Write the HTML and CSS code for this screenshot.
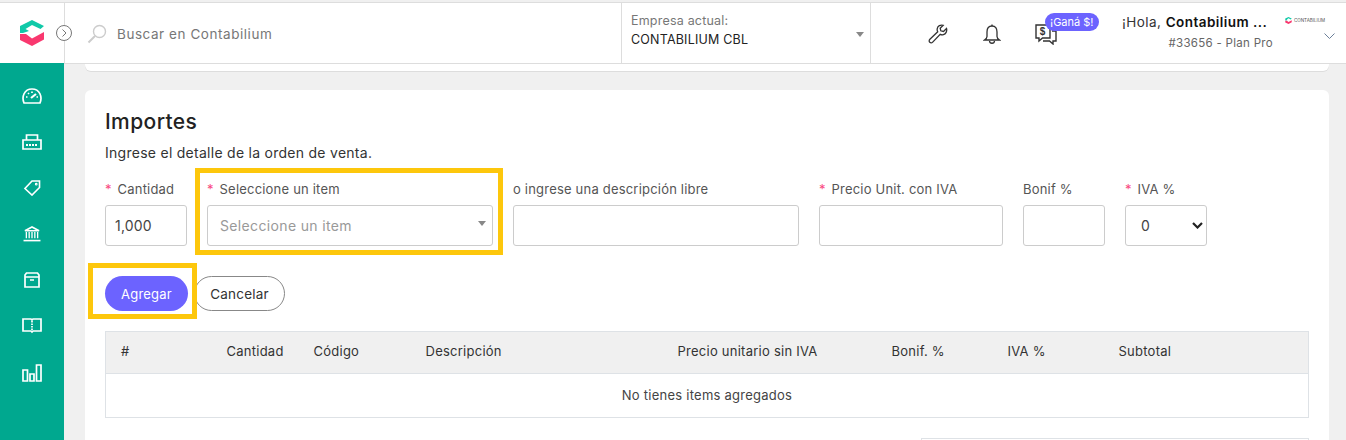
FILE: index.html
```html
<!DOCTYPE html>
<html lang="es">
<head>
    <meta charset="UTF-8">
    <title>Contabilium</title>
    <link rel="stylesheet" href="styles.css">
</head>
<body>

<!-- Top bar -->
<header class="topbar">
    <div class="brand">
        <svg width="24" height="26" viewBox="0 0 24 26">
            <path d="M12 0 L24 6 L20.500 9 L12 5 L5.500 9 L9 11 L3 13 L0 13 V6 Z" fill="#10c9a8"/>
            <path d="M0 14 V20 L12 26 L24 19.500 V12 L12 18.500 L6 14 Z" fill="#f9386f"/>
        </svg>
        <span class="toggle">
            <svg width="16" height="16" viewBox="0 0 16 16" fill="none" stroke="#777"><circle cx="8" cy="8" r="7.500"/><path d="M6.500 4.500 L10 8 L6.500 11.500"/></svg>
        </span>
    </div>
    <div class="search">
        <svg width="20" height="20" viewBox="0 0 20 20" fill="none" stroke="#ccc" stroke-width="1.400"><circle cx="12.500" cy="7.500" r="6"/><path d="M8 12 L1.500 18.500" stroke-width="2"/></svg>
        <span>Buscar en Contabilium</span>
    </div>
    <div class="company">
        <div class="company-label">Empresa actual:</div>
        <div class="company-name">CONTABILIUM CBL</div>
        <span class="caret"></span>
    </div>
    <div class="tools">
        <svg class="tool-wrench" width="20" height="20" viewBox="0 0 20 20" fill="none" stroke="#333" stroke-width="1.300"><path d="M18.500 4.500 L15.500 7.500 L12.800 6.800 L12.200 4.200 L15.200 1.300 C12.500 .4 9.600 2 9.200 4.800 C9 5.900 9.300 6.900 9.700 7.800 L1.900 15.300 C.9 16.300 1 17.600 1.800 18.300 C2.600 19 3.800 19 4.700 18.100 L12.200 10.400 C13.200 10.900 14.300 11 15.400 10.700 C17.800 10 19.300 7.200 18.500 4.500 Z"/></svg>
        <svg class="tool-bell" width="18" height="21" viewBox="0 0 18 21" fill="none" stroke="#333" stroke-width="1.300"><path d="M9 2 C5.500 2 4 4.500 4 8 L4 12.500 C4 14 3 15 1.500 16 L16.500 16 C15 15 14 14 14 12.500 L14 8 C14 4.500 12.500 2 9 2 Z"/><path d="M9 .5 V2 M6.500 17 C6.700 20 11.300 20 11.500 17"/></svg>
        <div class="promo">
            <svg width="22" height="21" viewBox="0 0 22 21" fill="none" stroke="#333" stroke-width="1.400"><path d="M15 11 V1 H1 V14 H4 V17 L7.500 14 H15 Z"/><path d="M17 7 H21 V17 H18 V20 L14.500 17 H8"/><text x="4.800" y="11" font-size="10" font-weight="700" fill="#333" stroke="none" font-family="Liberation Sans">$</text></svg>
            <span class="promo-badge">¡Ganá $!</span>
        </div>
    </div>
    <div class="user">
        <div class="user-hello">¡Hola, <b>Contabilium ...</b></div>
        <div class="user-plan">#33656 - Plan Pro</div>
    </div>
    <div class="user-logo">
        <div class="mini-logo">
            <svg width="7" height="7" viewBox="0 0 24 26"><path d="M12 0 L24 6 L20.500 9 L12 5 L5.500 9 L9 11 L3 13 L0 13 V6 Z" fill="#10c9a8"/><path d="M0 14 V20 L12 26 L24 19.500 V12 L12 18.500 L6 14 Z" fill="#f9386f"/></svg>
            <span>CONTABILIUM</span>
        </div>
        <svg class="user-chevron" width="11" height="7" viewBox="0 0 11 7" fill="none" stroke="#6b7f99"><path d="M.5 .5 L5.500 5.500 L10.500 .5"/></svg>
    </div>
</header>

<div class="layout">

    <!-- Sidebar -->
    <nav class="sidebar">
        <svg width="20" height="16" viewBox="0 0 20 16" fill="none" stroke="#fff" stroke-width="1.700"><path d="M2 15 C-.5 9 2 1 10 1 C18 1 20.500 9 18 15 Z"/><path d="M9 10 L14 6" stroke-width="2.200"/><path d="M4 9 H5.500 M6 5 L7 6 M10 3.500 V5 M16 9 H14.500"/></svg>
        <svg width="20" height="16" viewBox="0 0 20 16" fill="none" stroke="#fff" stroke-width="1.700"><path d="M4.500 6 V1 H15.500 V6"/><path d="M1 15 V6 H19 V15 Z"/><path d="M4 11 H16" stroke-width="2" stroke-dasharray="2 1"/></svg>
        <svg width="18" height="17" viewBox="0 0 18 17" fill="none" stroke="#fff" stroke-width="1.700"><path d="M9 1 H17 V8 L9 16 L1.500 9 Z"/><circle cx="13.500" cy="4.500" r=".6"/></svg>
        <svg width="18" height="17" viewBox="0 0 18 17" fill="none" stroke="#fff" stroke-width="1.700"><path d="M1.500 5 L9 1 L16.500 5 Z"/><path d="M3 6.500 V13 M6 6.500 V13 M9 6.500 V13 M12 6.500 V13 M15 6.500 V13" stroke-width="1.400"/><path d="M0 15.500 H18"/></svg>
        <svg width="16" height="16" viewBox="0 0 16 16" fill="none" stroke="#fff" stroke-width="1.700"><path d="M1 15 V3 L2.500 1 H13.500 L15 3 V15 Z"/><path d="M1 5 H15 M6 8 H10"/></svg>
        <svg width="20" height="16" viewBox="0 0 20 16" fill="none" stroke="#fff" stroke-width="1.700"><path d="M1 1 H9 L10 2 L11 1 H19 V13 H11 L10 14 L9 13 H1 Z"/><path d="M10 3 V13" stroke-dasharray="1.500 1"/></svg>
        <svg class="icon-chart" width="20" height="18" viewBox="0 0 20 18" fill="none" stroke="#fff" stroke-width="1.700"><path d="M1 6 H5.500 V17 H1 Z M8 10 H12 V17 H8 Z M14.500 1 H19 V17 H14.500 Z"/></svg>
    </nav>

    <main class="content">
        <div class="card card-prev"></div>

        <section class="card card-main">
            <h2>Importes</h2>
            <p class="hint">Ingrese el detalle de la orden de venta.</p>

            <div class="form-row">
                <div class="field w-sm">
                    <label><i>*</i> Cantidad</label>
                    <input type="text" value="1,000">
                </div>
                <div class="field w-lg marked-field">
                    <label><i>*</i> Seleccione un item</label>
                    <div class="fake-select">Seleccione un item<span class="caret"></span></div>
                </div>
                <div class="field w-lg">
                    <label>o ingrese una descripción libre</label>
                    <input type="text">
                </div>
                <div class="field w-md">
                    <label><i>*</i> Precio Unit. con IVA</label>
                    <input type="text">
                </div>
                <div class="field w-sm">
                    <label>Bonif %</label>
                    <input type="text">
                </div>
                <div class="field w-sm">
                    <label><i>*</i> IVA %</label>
                    <div class="fake-iva">0
                        <svg width="11" height="7" viewBox="0 0 11 7" fill="none" stroke="#222" stroke-width="2.200"><path d="M1 1 L5.500 5.500 L10 1"/></svg>
                    </div>
                </div>
            </div>

            <div class="actions">
                <div class="marked-btn">
                    <button class="btn-primary">Agregar</button>
                </div>
                <button class="btn-outline">Cancelar</button>
            </div>

            <table>
                <colgroup>
                    <col style="width:106px"><col style="width:87px"><col style="width:112px"><col style="width:252px">
                    <col style="width:214px"><col style="width:116px"><col style="width:111px"><col>
                </colgroup>
                <thead>
                    <tr>
                        <th>#</th>
                        <th>Cantidad</th>
                        <th>Código</th>
                        <th>Descripción</th>
                        <th>Precio unitario sin IVA</th>
                        <th>Bonif. %</th>
                        <th>IVA %</th>
                        <th>Subtotal</th>
                    </tr>
                </thead>
                <tbody>
                    <tr>
                        <td colspan="8">No tienes items agregados</td>
                    </tr>
                </tbody>
            </table>

            <div class="totals"></div>
        </section>
    </main>
</div>

</body>
</html>
```

FILE: styles.css
```css
* {
    box-sizing: border-box;
}

html, body {
    height: 440px;
    overflow: hidden;
}

body {
    margin: 0;
    background: #f0f0f0;
    font-family: "Inter", "Open Sans", sans-serif;
    font-size: 13px;
    color: #333;
}

/* top bar */
.topbar {
    display: flex;
    align-items: stretch;
    height: 62px;
    margin-top: 2px;
    margin-bottom: -1px;
    background: white;
    border-top: 1px solid #ddd;
    border-bottom: 1px solid #ddd;
    position: relative;
    z-index: 2;
}

.brand {
    width: 65px;
    display: flex;
    align-items: center;
    padding-left: 20px;
    border-right: 1px solid #ddd;
    position: relative;
    flex: none;
}

.toggle {
    position: absolute;
    left: 56px;
    top: 22px;
    width: 16px;
    height: 16px;
    display: flex;
    background: white;
    border-radius: 50%;
}

.search {
    width: 556px;
    flex: none;
    display: flex;
    align-items: center;
    gap: 10px;
    padding: 2px 0 0 22px;
    color: #777;
    font-size: 13.5px;
    letter-spacing: .55px;
}

.company {
    width: 250px;
    flex: none;
    border-left: 1px solid #ddd;
    border-right: 1px solid #ddd;
    padding: 9px 0 0 9px;
    position: relative;
    letter-spacing: .2px;
}

.company-label {
    font-size: 12.5px;
    color: #777;
    line-height: 18px;
}

.company-name {
    font-size: 12.5px;
    color: #222;
    line-height: 20px;
}

.caret {
    position: absolute;
    right: 6px;
    top: 29px;
    border-left: 4px solid transparent;
    border-right: 4px solid transparent;
    border-top: 5px solid #888;
}

.tools {
    width: 251px;
    flex: none;
    display: flex;
    align-items: center;
    padding: 2px 0 0 57px;
}

.tool-bell {
    margin-left: 35px;
}

.promo {
    margin-left: 34px;
    position: relative;
    display: flex;
}

.promo-badge {
    position: absolute;
    left: 10px;
    top: -11px;
    background: #6c63ff;
    color: white;
    font-size: 11px;
    line-height: 18px;
    padding: 0 5px;
    border-radius: 9px;
    white-space: nowrap;
}

.user {
    width: 163px;
    flex: none;
    text-align: right;
    padding-top: 10px;
    letter-spacing: .3px;
}

.user-hello {
    font-size: 13.5px;
    color: #333;
    line-height: 18px;
    text-align: left;
    letter-spacing: .45px;
}

.user-hello b {
    color: #111;
    font-weight: 600;
}

.user-plan {
    font-size: 11.5px;
    color: #666;
    line-height: 24px;
    padding-right: 12px;
}

.user-logo {
    flex: 1;
    position: relative;
}

.mini-logo {
    display: flex;
    align-items: center;
    gap: 2px;
    margin-top: 14px;
    font-size: 4.5px;
    color: #555;
    white-space: nowrap;
}

.user-chevron {
    position: absolute;
    left: 39px;
    top: 30px;
}

/* page */
.layout {
    display: flex;
    height: 377px;
}

.sidebar {
    width: 64px;
    flex: none;
    background: #00a88f;
    display: flex;
    flex-direction: column;
    align-items: center;
    padding-top: 25px;
    gap: 30px;
    position: relative;
    z-index: 3;
}

.sidebar svg {
    height: 16px;
    flex: none;
}

.sidebar .icon-chart {
    height: 18px;
}

.content {
    flex: 1;
    padding: 0 17px 0 21px;
    min-width: 0;
}

.card {
    background: white;
    border-radius: 6px;
}

.card-prev {
    height: 8px;
    border-radius: 0 0 6px 6px;
    margin-bottom: 19px;
    box-shadow: 0 1px 0 #ddd;
}

.card-main {
    height: 350px;
    padding: 20px 20px 0;
    border-radius: 6px 6px 0 0;
}

h2 {
    margin: 0;
    font-size: 21px;
    font-weight: 500;
    line-height: 24px;
    color: #222;
    letter-spacing: .4px;
}

.hint {
    margin: 9px 0 0;
    font-size: 14px;
    line-height: 20px;
    color: #333;
    letter-spacing: .27px;
}

.form-row {
    display: flex;
    gap: 20px;
    margin-top: 17px;
}

.field label {
    display: block;
    height: 25px;
    line-height: 19px;
    color: #555;
    white-space: nowrap;
    letter-spacing: .2px;
}

.field label i {
    color: #f9487f;
    font-style: normal;
    margin-right: 2px;
}

.w-sm { width: 82px; }
.w-md { width: 184px; }
.w-lg { width: 286px; }

.field input,
.fake-select,
.fake-iva {
    display: block;
    width: 100%;
    height: 41px;
    border: 1px solid #ccc;
    border-radius: 3px;
    background: white;
    font-family: inherit;
    font-size: 14px;
    color: #444;
    padding: 0 9px;
    letter-spacing: .2px;
}

.fake-select {
    position: relative;
    line-height: 39px;
    padding-left: 12px;
    color: #999;
    letter-spacing: .35px;
}

.fake-select .caret {
    top: 15px;
}

.fake-iva {
    display: flex;
    align-items: center;
    justify-content: space-between;
    padding: 0 3px 0 15px;
}

.marked-field,
.marked-btn {
    position: relative;
}

.marked-field::after,
.marked-btn::after {
    content: "";
    position: absolute;
    border: 5px solid #fdc70c;
    pointer-events: none;
}

.marked-field::after {
    left: -12px;
    right: -10px;
    top: -12px;
    bottom: -9px;
}

.marked-btn::after {
    left: -17px;
    right: -9px;
    top: -13px;
    bottom: -8px;
    z-index: 1;
}

.actions {
    display: flex;
    gap: 6px;
    margin-top: 30px;
}

.actions button {
    display: block;
    height: 35px;
    border-radius: 18px;
    font-family: inherit;
    font-size: 13px;
    letter-spacing: .2px;
    cursor: pointer;
}

.actions .btn-primary {
    width: 83px;
    background: #6c63ff;
    color: white;
    border: none;
}

.actions .btn-outline {
    width: 91px;
    background: white;
    color: #333;
    border: 1px solid #888;
    font-size: 13.5px;
}

table {
    width: 100%;
    table-layout: fixed;
    border-collapse: collapse;
    margin-top: 20px;
}

th, td {
    border: 1px solid #dee2e6;
    font-weight: 400;
    letter-spacing: .25px;
    padding-bottom: 3px;
}

th {
    height: 42px;
    background: #f0f0f0;
    color: #333;
    text-align: left;
    padding-left: 15px;
    padding-right: 0;
    padding-top: 0;
    border-left: none;
    border-right: none;
    white-space: nowrap;
}

th:first-child { border-left: 1px solid #dee2e6; }
th:last-child { border-right: 1px solid #dee2e6; }

td {
    height: 44px;
    text-align: center;
    color: #444;
}

.totals {
    width: 388px;
    height: 2px;
    margin: 20px 0 0 auto;
    border-top: 1px solid #dee2e6;
    border-left: 1px solid #dee2e6;
    border-right: 1px solid #dee2e6;
}
```
